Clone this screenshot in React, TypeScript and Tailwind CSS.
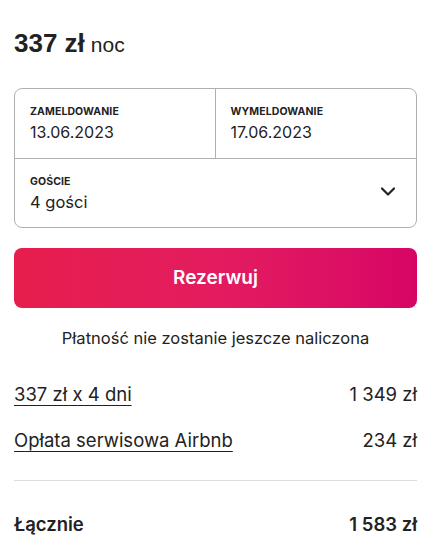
import React from "react";

const font = { fontFamily: "Inter, 'Noto Sans', sans-serif" };
const arial = { fontFamily: "'Liberation Sans', Arial, sans-serif" };

export default function App() {
  return (
    <div className="w-[445px] h-[555px] bg-white pl-[14px] pr-[28px] text-[#222222] overflow-hidden" style={font}>
      {/* Price */}
      <div className="pt-[28px] flex items-baseline gap-[6px] leading-[30px]">
        <span className="text-[26px] font-bold leading-[30px]" style={arial}>
          337 zł
        </span>
        <span className="text-[21px] leading-[30px]" style={arial}>
          noc
        </span>
      </div>

      {/* Booking box */}
      <div className="mt-[28px] border border-[#b0b0b0] rounded-[8px]">
        <div className="grid grid-cols-2 border-b border-[#b0b0b0] h-[70px]">
          <div className="pl-[15px] pt-[16px] border-r border-[#b0b0b0]">
            <div className="text-[10.5px] font-bold tracking-[0.01em] leading-[14px]">ZAMELDOWANIE</div>
            <div className="text-[16px] leading-[20px] mt-[3px]">13.06.2023</div>
          </div>
          <div className="pl-[15px] pt-[16px]">
            <div className="text-[10.5px] font-bold tracking-[0.01em] leading-[14px]">WYMELDOWANIE</div>
            <div className="text-[16px] leading-[20px] mt-[3px]">17.06.2023</div>
          </div>
        </div>
        <div className="h-[68px] flex items-center justify-between pl-[15px] pr-[20px]">
          <div className="mt-[2px]">
            <div className="text-[10.5px] font-bold tracking-[0.01em] leading-[14px]">GOŚCIE</div>
            <div className="text-[16.5px] leading-[22px] mt-[2px]">4 gości</div>
          </div>
          <svg width="16" height="16" viewBox="0 0 16 16" fill="none" className="-mt-[4px]">
            <path d="M2 5.5l6 6 6-6" stroke="#222222" strokeWidth="2.2" strokeLinecap="round" strokeLinejoin="round" />
          </svg>
        </div>
      </div>

      {/* Reserve button */}
      <button className="mt-[20px] w-full h-[60px] rounded-[8px] text-white text-[19px] font-semibold bg-gradient-to-r from-[#e61e4d] via-[#e31c5f] to-[#d70466]">
        Rezerwuj
      </button>

      <p className="mt-[20px] text-center text-[16.5px] leading-[20px]">Płatność nie zostanie jeszcze naliczona</p>

      {/* Price lines */}
      <div className="mt-[35px] flex flex-col gap-[24px] text-[18.5px] leading-[22px]">
        <div className="flex justify-between">
          <span className="underline underline-offset-[4px] decoration-[1px]">337 zł x 4 dni</span>
          <span>1 349 zł</span>
        </div>
        <div className="flex justify-between">
          <span className="underline underline-offset-[4px] decoration-[1px]">Opłata serwisowa Airbnb</span>
          <span>234 zł</span>
        </div>
      </div>

      <div className="mt-[29px] border-t border-[#dddddd]" />

      <div className="mt-[32px] flex justify-between text-[18.5px] leading-[22px] font-semibold">
        <span>Łącznie</span>
        <span>1 583 zł</span>
      </div>
    </div>
  );
}
